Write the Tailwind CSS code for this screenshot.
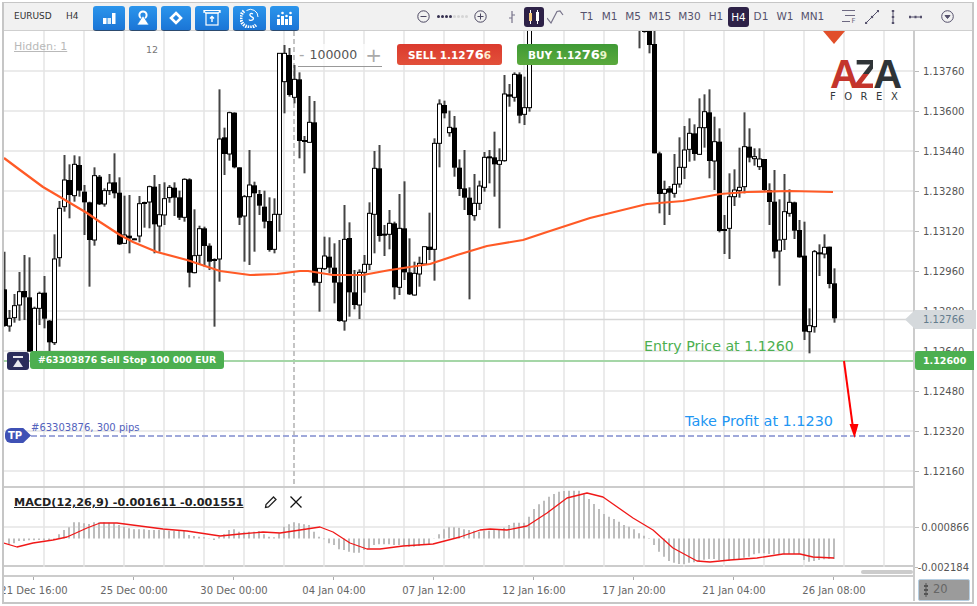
<!DOCTYPE html>
<html lang="en">
<head>
  <meta charset="UTF-8" />
  <title>EURUSD H4</title>
  <script src="https://cdn.jsdelivr.net/npm/@tailwindcss/browser@4"></script>
</head>
<body class="bg-white">
<div class="w-[977px] h-[606px] overflow-hidden pl-[2px] pt-[2px] font-['DejaVu_Sans',sans-serif]">
  <div class="w-[972px] h-[602px] border-x-2 border-t border-b-2 border-[#c6c6c6]">

    <!-- toolbar -->
    <div class="flex items-center h-[28px] bg-[#f1f1f1] border-b border-[#cfcfcf] text-[#3d3a55]">
      <span class="w-[62px] pl-[10px] text-[9px] text-[#333]">EURUSD</span>
      <span class="w-[27px] text-[9px] text-[#333]">H4</span>
      <div class="flex gap-[4px] h-[25px] mt-[3px]">
        <button class="w-[32px] flex items-center justify-center rounded-[3px] border-b border-[#2c4a6e] bg-linear-to-b from-[#2b95ec] to-[#1b75d6]">
          <svg width="14" height="12" viewBox="0 0 14 12" fill="#fff"><rect x="1" y="6" width="3.5" height="6"/><rect x="5.5" y="6" width="3.5" height="6" fill="#d8ecfb"/><rect x="10" y="1" width="3.5" height="11"/></svg>
        </button>
        <button class="w-[28px] flex items-center justify-center rounded-[3px] border-b border-[#2c4a6e] bg-linear-to-b from-[#2b95ec] to-[#1b75d6]">
          <svg width="14" height="15" viewBox="0 0 14 15"><circle cx="7" cy="5" r="3.600" fill="none" stroke="#fff" stroke-width="2"/><path d="M7 5.500 13 15H1z" fill="#fff" stroke="#2186e2" stroke-width=".8"/></svg>
        </button>
        <button class="w-[30px] flex items-center justify-center rounded-[3px] border-b border-[#2c4a6e] bg-linear-to-b from-[#2b95ec] to-[#1b75d6]">
          <svg width="14" height="14" viewBox="0 0 14 14" fill="none" stroke="#fff" stroke-width="2.6"><path d="M7 2 12 7 7 12 2 7z"/></svg>
        </button>
        <button class="w-[34px] flex items-center justify-center rounded-[3px] border-b border-[#2c4a6e] bg-linear-to-b from-[#2b95ec] to-[#1b75d6]">
          <svg width="18" height="17" viewBox="0 0 18 17" fill="none" stroke="#fff" stroke-width="1.2"><path d="M1 4V1.5h16V4"/><path d="M1 1.5 2.5 4h13L17 1.5"/><rect x="3" y="4" width="12" height="12"/><path d="M9 13V7.5M7 9.5l2-2 2 2" stroke-width="1.4"/></svg>
        </button>
        <button class="w-[33px] flex items-center justify-center rounded-[3px] border-b border-[#2c4a6e] bg-linear-to-b from-[#2b95ec] to-[#1b75d6]">
          <svg width="20" height="20" viewBox="0 0 20 20" fill="none" stroke="#fff"><path d="M4 3A8.500 8.500 0 0 0 16 17" stroke-width="3.400" stroke-dasharray="1.500 1"/><path d="M6.500 2.500A7.500 7.500 0 0 1 18 9" stroke-width="1"/><path d="M13 6C10.500 4.500 9 6.500 10.500 8S14.500 9.500 13 11.500C11.500 13 9.500 12.500 9 11.500" stroke-width="1.300"/></svg>
        </button>
        <button class="w-[29px] flex items-center justify-center rounded-[3px] border-b border-[#2c4a6e] bg-linear-to-b from-[#2b95ec] to-[#1b75d6]">
          <svg width="15" height="14" viewBox="0 0 15 14" fill="#fff"><rect x="0" y="8" width="3" height="6"/><rect x="4" y="5" width="3" height="9"/><rect x="8" y="8" width="3" height="6"/><rect x="12" y="5" width="3" height="9"/><circle cx="1.500" cy="5" r="1.300"/><circle cx="5.500" cy="2" r="1.300"/><circle cx="9.500" cy="5" r="1.300"/><circle cx="13.500" cy="2" r="1.300"/></svg>
        </button>
      </div>

      <!-- zoom -->
      <svg class="ml-[118px]" width="13" height="13" viewBox="0 0 13 13" fill="none" stroke="#4a4660"><circle cx="6.500" cy="6.500" r="5.700"/><path d="M3.500 6.500h6"/></svg>
      <div class="flex gap-px ml-[7px] mr-[6px]">
        <i class="w-[3px] h-[3px] rounded-full bg-[#35304f]"></i><i class="w-[3px] h-[3px] rounded-full bg-[#35304f]"></i><i class="w-[3px] h-[3px] rounded-full bg-[#35304f]"></i><i class="w-[3px] h-[3px] rounded-full bg-[#35304f]"></i>
        <i class="w-[3px] h-[3px] rounded-full bg-[#d5d5d5]"></i><i class="w-[3px] h-[3px] rounded-full bg-[#d5d5d5]"></i><i class="w-[3px] h-[3px] rounded-full bg-[#d5d5d5]"></i><i class="w-[3px] h-[3px] rounded-full bg-[#d5d5d5]"></i>
      </div>
      <svg width="13" height="13" viewBox="0 0 13 13" fill="none" stroke="#4a4660"><circle cx="6.500" cy="6.500" r="5.700"/><path d="M3.500 6.500h6M6.500 3.500v6"/></svg>

      <!-- chart type -->
      <svg class="ml-[19px]" width="12" height="14" viewBox="0 0 12 14" fill="none" stroke="#77738a" stroke-width="1.200"><path d="M6 1v12M3 8h3M6 5h3"/></svg>
      <div class="ml-[6px] w-[20px] h-[20px] rounded-[3px] bg-[#2d2147] flex items-center justify-center">
        <svg width="14" height="14" viewBox="0 0 14 14"><path d="M3.500 0v14M10.500 0v14" stroke="#fff"/><rect x="2" y="3" width="3" height="8" fill="#f6c97a"/><rect x="9" y="2" width="3" height="9" fill="#fff"/></svg>
      </div>
      <svg class="ml-[3px]" width="17" height="14" viewBox="0 0 17 14" fill="none" stroke="#77738a" stroke-width="1.200"><path d="M0 8l4 5L10 1.500 13 1l3 4"/></svg>

      <!-- timeframes -->
      <div class="flex items-center ml-[12px] text-[10.500px] text-[#55516c] text-center">
        <span class="w-[22px]">T1</span>
        <span class="w-[23px]">M1</span>
        <span class="w-[24px]">M5</span>
        <span class="w-[30px]">M15</span>
        <span class="w-[29px]">M30</span>
        <span class="w-[24px]">H1</span>
        <span class="w-[21px] h-[20px] leading-[20px] rounded-[3px] bg-[#2d2147] text-white">H4</span>
        <span class="w-[24px]">D1</span>
        <span class="w-[24px]">W1</span>
        <span class="w-[31px]">MN1</span>
      </div>

      <!-- drawing tools -->
      <svg class="ml-[14px]" width="15" height="14" viewBox="0 0 15 14" fill="none" stroke="#6d6981"><path d="M0 .5h13M3 5.500h10M0 11.500h8"/><text x="9.500" y="13" font-size="7" fill="#6d6981" stroke="none" font-family="DejaVu Sans">F</text></svg>
      <svg class="ml-[8px]" width="14" height="14" viewBox="0 0 14 14" fill="none" stroke="#55516c"><path d="M1 13 13 1"/><path d="M1 13h.1M7 7h.1M13 1h.1" stroke-width="2.400" stroke-linecap="round"/></svg>
      <svg class="ml-[12px]" width="4" height="14" viewBox="0 0 4 14" fill="none" stroke="#55516c"><path d="M2 0v14" stroke-width="1"/><path d="M2 0v2M2 6v2M2 12v2" stroke-width="2.400"/></svg>
      <svg class="ml-[14px]" width="13" height="4" viewBox="0 0 13 4" fill="none" stroke="#55516c"><path d="M0 2h13"/><path d="M0 2h2M5.500 2h2M11 2h2" stroke-width="2.400"/></svg>
      <svg class="ml-[19px]" width="13" height="13" viewBox="0 0 13 13" fill="none" stroke="#55516c"><circle cx="6.500" cy="6.500" r="5.800"/><path d="M4 5.500h5L6.500 8.500z" fill="#55516c"/></svg>
    </div>

    <div class="flex">
      <!-- left column -->
      <div class="w-[909px]">
        <div class="relative h-[455px]">
          <svg id="chart" class="block" width="909" height="455" viewBox="4 31 909 455"></svg>

          <span class="absolute left-[10px] top-[8px] text-[11px] text-[#b9b9b9] underline">Hidden: 1</span>
          <span class="absolute left-[142px] top-[12px] text-[9.500px] text-[#777]">12</span>

          <div class="absolute left-[294px] top-[13px] w-[84px] h-[23px] flex items-center border-b border-[#999] text-[#555] bg-white/70">
            <span class="w-[16px] text-center text-[15px] text-[#aaa]">-</span>
            <span class="ml-[4px] text-[12.500px]">100000</span>
            <span class="ml-[8px] text-[20px] leading-none text-[#aaa]">+</span>
          </div>

          <button class="absolute left-[393px] top-[13px] w-[105px] h-[21px] rounded-[3px] bg-linear-to-b from-[#db3a2e] to-[#e2503a] text-white font-bold text-[10.500px] leading-[21px]">SELL 1.12<span class="text-[13px]">76</span><span class="text-[#fde9c9]">6</span></button>
          <button class="absolute left-[513px] top-[13px] w-[101px] h-[21px] rounded-[3px] bg-linear-to-b from-[#3f9a36] to-[#5aa93c] text-white font-bold text-[10.500px] leading-[21px]">BUY 1.12<span class="text-[13px]">76</span><span class="text-[#e8f5c8]">9</span></button>

          <div class="absolute left-[826px] top-[25px] w-[70px] whitespace-nowrap">
            <div class="text-[40px] leading-[36px] h-[36px] font-bold tracking-[-5px] font-['Liberation_Sans',sans-serif]"><span class="text-[#c4352c]">A</span><span class="text-transparent bg-clip-text bg-linear-to-b from-[#2f3437] from-50% to-[#c4352c] to-50%">Z</span><span class="text-[#2f3437]">A</span></div>
            <div class="text-[10px] leading-[10px] tracking-[8.500px] text-[#33383b]">FOREX</div>
          </div>

          <div class="absolute left-[3px] top-[321px] w-[22px] h-[18px] rounded-[3px] bg-[#2b2d5b] flex items-center justify-center">
            <svg width="12" height="11" viewBox="0 0 12 11" fill="#e8e8ee"><rect x="1" y="0" width="10" height="2"/><path d="M6 3.500 11 11H1z"/></svg>
          </div>
          <div class="absolute left-[26px] top-[320px] w-[194px] h-[18px] rounded-[3px] bg-[#4caf50] text-white font-bold text-[9.250px] leading-[18px] text-center whitespace-nowrap">#63303876 Sell Stop 100 000 EUR</div>
          <span class="absolute left-[640px] top-[305px] text-[14.200px] text-[#4caf50] whitespace-nowrap">Entry Price at 1.1260</span>

          <div class="absolute left-[1px] top-[397px] w-[26px] h-[15px] bg-[#3f51b5] text-white font-bold text-[10px] leading-[15px] pl-[3px] rounded-l-[6px] [clip-path:polygon(0_0,70%_0,100%_50%,70%_100%,0_100%)]">TP</div>
          <span class="absolute left-[27px] top-[389px] text-[10px] text-[#5262bd] whitespace-nowrap">#63303876, 300 pips</span>
          <span class="absolute left-[681px] top-[380px] text-[14.400px] text-[#2196f3] whitespace-nowrap">Take Profit at 1.1230</span>
        </div>

        <div class="relative h-[81px] border-y-2 border-[#cccccc]">
          <svg id="macd" class="block" width="909" height="79" viewBox="4 488 909 79"></svg>
          <span class="absolute left-[10px] top-[7px] text-[11.200px] font-bold text-[#222] underline whitespace-nowrap">MACD(12,26,9) -0.001611 -0.001551</span>
          <svg class="absolute left-[260px] top-[7px]" width="14" height="14" viewBox="0 0 14 14" fill="none" stroke="#222" stroke-width="1.300"><path d="M1.500 12.500 2 9.500 9.500 2 12 4.500 4.500 12z"/></svg>
          <svg class="absolute left-[285px] top-[7px]" width="14" height="14" viewBox="0 0 14 14" fill="none" stroke="#111" stroke-width="1.300"><path d="M1.500 1.500 12.500 12.500M12.500 1.500 1.500 12.500"/></svg>
        </div>

        <div class="relative h-[10px] border-b-2 border-[#cccccc]">
          <div class="absolute left-[857px] top-[3px] w-[52px] h-[4px] rounded-full bg-[#cccccc]"></div>
        </div>

        <div class="flex w-[909px] h-[24px] overflow-hidden text-[10px] text-[#666]">
          <div class="w-[100px] ml-[-20px] text-center relative shrink-0 pt-[6px]"><i class="absolute left-[49px] top-0 w-px h-[3px] bg-[#aaa]"></i>21 Dec 16:00</div>
          <div class="w-[100px] text-center relative shrink-0 pt-[6px]"><i class="absolute left-[49px] top-0 w-px h-[3px] bg-[#aaa]"></i>25 Dec 00:00</div>
          <div class="w-[100px] text-center relative shrink-0 pt-[6px]"><i class="absolute left-[49px] top-0 w-px h-[3px] bg-[#aaa]"></i>30 Dec 00:00</div>
          <div class="w-[100px] text-center relative shrink-0 pt-[6px]"><i class="absolute left-[49px] top-0 w-px h-[3px] bg-[#aaa]"></i>04 Jan 04:00</div>
          <div class="w-[100px] text-center relative shrink-0 pt-[6px]"><i class="absolute left-[49px] top-0 w-px h-[3px] bg-[#aaa]"></i>07 Jan 12:00</div>
          <div class="w-[100px] text-center relative shrink-0 pt-[6px]"><i class="absolute left-[49px] top-0 w-px h-[3px] bg-[#aaa]"></i>12 Jan 16:00</div>
          <div class="w-[100px] text-center relative shrink-0 pt-[6px]"><i class="absolute left-[49px] top-0 w-px h-[3px] bg-[#aaa]"></i>17 Jan 20:00</div>
          <div class="w-[100px] text-center relative shrink-0 pt-[6px]"><i class="absolute left-[49px] top-0 w-px h-[3px] bg-[#aaa]"></i>21 Jan 04:00</div>
          <div class="w-[100px] text-center relative shrink-0 pt-[6px]"><i class="absolute left-[49px] top-0 w-px h-[3px] bg-[#aaa]"></i>26 Jan 08:00</div>
        </div>
      </div>

      <!-- price axis -->
      <div class="relative z-10 w-[59px] border-l-2 border-[#cccccc] text-[10px] text-[#555]">
        <div class="h-[455px] pt-[20px]">
          <div class="flex items-center h-[40px]"><i class="w-[4px] h-px bg-[#bbb] mr-[4px]"></i>1.13760</div>
          <div class="flex items-center h-[40px]"><i class="w-[4px] h-px bg-[#bbb] mr-[4px]"></i>1.13600</div>
          <div class="flex items-center h-[40px]"><i class="w-[4px] h-px bg-[#bbb] mr-[4px]"></i>1.13440</div>
          <div class="flex items-center h-[40px]"><i class="w-[4px] h-px bg-[#bbb] mr-[4px]"></i>1.13280</div>
          <div class="flex items-center h-[40px]"><i class="w-[4px] h-px bg-[#bbb] mr-[4px]"></i>1.13120</div>
          <div class="flex items-center h-[40px]"><i class="w-[4px] h-px bg-[#bbb] mr-[4px]"></i>1.12960</div>
          <div class="flex items-center h-[40px]"><i class="w-[4px] h-px bg-[#bbb] mr-[4px]"></i>1.12800</div>
          <div class="flex items-center h-[40px]"><i class="w-[4px] h-px bg-[#bbb] mr-[4px]"></i>1.12640</div>
          <div class="flex items-center h-[40px]"><i class="w-[4px] h-px bg-[#bbb] mr-[4px]"></i>1.12480</div>
          <div class="flex items-center h-[40px]"><i class="w-[4px] h-px bg-[#bbb] mr-[4px]"></i>1.12320</div>
          <div class="flex items-center h-[40px]"><i class="w-[4px] h-px bg-[#bbb] mr-[4px]"></i>1.12160</div>
        </div>
        <div class="h-[92px] pt-[31px]">
          <div class="flex items-center justify-between h-[20px] mb-[20px] pr-[3px]"><i class="w-[4px] h-px bg-[#bbb]"></i>0.000866</div>
          <div class="flex items-center justify-between h-[20px] pr-[3px]"><i class="w-[3px] h-px bg-[#bbb]"></i>-0.002184</div>
        </div>
        <div class="ml-[3px] w-[52px] h-[22px] mt-[1px] flex items-center gap-[4px] pl-[4px] rounded-[2px] bg-[#9b9b9b] border border-[#b7cfe2] text-[11.500px] text-[#666]">
          <svg width="6" height="14" viewBox="0 0 6 14" fill="none" stroke="#555"><path d="M3 0v14"/><path d="M1 3h4M1 11h4M1 7h4" stroke-width="2"/></svg>
          20
        </div>

        <!-- live price tags -->
        <div class="absolute left-[-10px] top-[279px] w-[71px] h-[19px] pl-[18px] bg-[#d5d9dc] text-[#637c8d] leading-[19px] [clip-path:polygon(0_50%,14%_0,100%_0,100%_100%,14%_100%)]">1.12766</div>
        <div class="absolute left-0 top-[320px] w-[59px] h-[19px] pl-[8px] rounded-l-[3px] bg-[#4caf50] text-white font-bold text-[9.500px] leading-[19px]">1.12600</div>
      </div>
    </div>
  </div>
</div>

<script>
  // candles read off the chart, [wick top, wick bottom, body top, body bottom, black?]
  // rows are 5px apart and given in 3x units so they line up with the crop they came from
  const runs = [
    { x: 4, oy: 80, rows: [
      [515,740,628,738,1],[690,755,715,738,0],[642,728,677,713,0],[576,722,635,675,0],[525,720,633,652,1],[532,815,652,815,1],
      [680,815,685,815,0],[635,735,640,685,0],[588,745,638,716,1],[720,815,722,787,1],[463,795,537,788,0],[363,560,385,533,0],
      [225,395,300,380,0],[253,415,300,345,1],[226,365,253,347,0],[229,350,255,332,1],[315,465,335,367,1],[365,620,367,480,1],
      [262,497,287,480,0],[285,375,290,373,1],[325,380,332,372,0],[282,345,309,332,0],[220,355,307,340,1],[292,495,338,493,1],
      [347,492,465,490,0],[345,520,467,475,1],[475,477,475,477,1],[348,487,371,468,0],[365,443,366,369,1],[317,445,320,366,0],
      [285,520,320,433,1],[312,515,404,438,0],[307,435,356,405,0],[315,368,322,353,0],[307,408,323,353,1],[332,420,352,413,1],
      [295,425,298,412,0],[295,622,298,578,1],[388,580,527,578,0],[437,555,446,526,0],[440,560,445,498,1],[490,570,497,545,1],
      [535,740,537,543,1],[28,605,177,537,0],[143,285,172,222,1],[95,242,98,222,0],[97,265,98,262,1],[262,435,262,413,1],
      [345,545,350,408,0],[210,555,315,350,0],[305,515,316,340,1],[330,405,342,377,1],[332,445,380,425,1],[352,515,423,510,1],
      [355,520,403,508,0],[270,455,-80,403,0],[-105,100,-80,5,0]
    ]},
    { x: 289, oy: 40, rows: [
      [24,170,45,165,1],[75,190,118,172,0],[97,355,118,303,1],[288,400,300,306,1],[168,307,247,307,0],[183,737,247,728,1],
      [685,815,685,727,0],[590,690,648,686,0],[592,700,650,683,1],[610,790,683,728,1],[600,845,727,843,1],[495,872,598,843,0],
      [547,830,594,757,1],[690,808,757,795,1],[688,837,697,795,0],[645,758,673,697,0],[487,690,520,673,0],[333,640,385,523,0],
      [315,605,385,588,1],[555,648,581,586,1],[510,628,550,583,0],[545,778,550,742,1],[462,765,565,742,0],[424,720,565,697,1],
      [595,765,697,763,1],[665,767,700,765,0],[650,740,670,702,0],[620,675,620,672,0],[518,660,620,630,1],[295,722,310,628,0],
      [178,382,192,310,0],[182,235,195,220,1],[212,290,262,278,0],[228,410,263,383,1],[358,468,383,447,1],[330,510,445,473,1],
      [442,778,473,525,1],[402,542,490,527,0],[422,510,438,490,0],[336,455,352,442,0],[330,430,349,352,1],[275,470,352,373,1],
      [325,565,362,373,0],[105,365,162,362,0],[132,200,163,170,1],[97,185,103,172,0],[97,250,103,227,1],[110,255,203,223,0],
      [-40,215,-40,203,0]
    ]},
    { x: 639, oy: 30, rows: [
      [-10,55,-10,-10,1],[0,8,0,4,1],[-10,70,-10,45,1],[-10,370,42,370,1],[365,550,370,492,1],[452,585,478,490,0],[468,555,475,488,1],
      [372,503,463,490,0],[322,473,412,462,0],[288,447,360,412,0],[265,395,310,358,0],[283,392,310,372,1],[205,375,293,373,0],
      [193,353,245,293,0],[178,445,247,393,1],[260,480,335,393,0],[295,607,335,603,1],[555,672,597,603,1],[430,687,500,595,0],
      [418,528,480,500,0],[353,503,472,482,0],[247,490,350,470,0],[295,397,350,383,1],[355,407,380,385,0],[355,420,387,410,0],
      [387,483,387,480,1],[460,585,480,516,1],[420,685,515,665,1],[508,767,630,663,0],[432,660,545,628,0],[478,560,517,550,0],
      [515,627,517,602,1],[570,683,600,682,1],[575,930,677,905,1],[835,970,887,905,0],[660,908,665,890,0],[643,738,667,673,1],
      [613,685,652,672,0],[650,775,650,762,1],[715,878,760,865,1]
    ]}
  ];

  const ema = "M4 158 20 170 43 187 60 197 87 213 100 222 120 235 133 242 157 252 187 260 220 271 250 275 277 274 300 271 308 271 333 275 363 275 390 270 430 264 457 255 487 246 523 240 547 232 590 218 647 204 683 201 720 194 747 192 790 191 833 192";
  const signal = "M4 543 17 547 33 543 53 540 67 537 87 528 100 523 117 523 140 526 163 529 187 531 220 536 240 534 263 532 280 533 300 530 320 527 333 532 350 543 367 549 380 549 403 546 433 544 460 537 480 530 490 529 507 530 527 526 547 513 567 498 587 493 603 497 633 518 653 530 673 548 697 561 710 562 730 560 757 558 783 554 800 554 813 557 834 558";

  // histogram bar ends, 3x units from y=485, first bar at x=9
  const hist = [178,175,168,168,166,166,165,165,165,165,148,135,127,112,112,115,117,112,112,112,113,115,120,125,130,133,133,133,135,135,135,135,137,137,137,137,150,153,155,157,160,165,155,148,135,133,140,140,140,140,138,148,155,157,145,125,118,112,115,118,120,140,155,163,175,180,193,195,200,203,203,195,190,180,178,178,178,180,180,182,185,185,183,180,178,160,148,133,127,127,128,133,135,137,140,137,137,135,135,128,120,113,113,113,95,72,58,47,35,27,20,18,17,17,17,28,42,57,72,87,95,102,110,120,125,133,145,152,159,180,200,215,228,233,237,237,233,232,228,224,222,222,225,226,228,225,222,218,215,208,205,205,207,208,210,208,207,207,208,225,230,228,225,223,222,222];

  function grid(y0, y1, rows) {
    let s = "";
    for (let x = 44; x < 900; x += 40) s += `<path d="M${x} ${y0}V${y1}" stroke="#e4e4e4" stroke-width="1.500"/>`;
    rows.forEach(y => s += `<path d="M4 ${y}H913" stroke="#e4e4e4" stroke-width="1.500"/>`);
    return s;
  }

  let main = grid(31, 486, [71,111,151,191,231,271,311,351,391,431,471]);
  main += `<path d="M294 31V486" stroke="#c4c4c4" stroke-width="2" stroke-dasharray="5 3"/>`;
  main += `<path d="M4 319.500H913" stroke="#d6d6d6" stroke-width="1.500"/>`;

  runs.forEach(run => run.rows.forEach((c, i) => {
    const x = run.x + i * 5 + 0.5;
    const [wt, wb, bt, bb] = c.slice(0, 4).map(v => v / 3 + run.oy);
    main += `<path d="M${x} ${wt}V${wb}" stroke="#444" stroke-width="2"/>`;
    main += c[4]
      ? `<rect x="${x - 2.5}" y="${bt}" width="5" height="${Math.max(bb - bt, 2)}" fill="#000"/>`
      : `<rect x="${x - 2}" y="${bt}" width="4" height="${Math.max(bb - bt, 2)}" fill="#fff" stroke="#000" stroke-width="1"/>`;
  }));

  main += `<path d="${ema}" fill="none" stroke="#ff5a26" stroke-width="2.200" stroke-linejoin="round"/>`;
  main += `<path d="M4 361H913" stroke="#a5d6a7" stroke-width="2"/>`;
  main += `<path d="M31 436H913" stroke="#9fa8da" stroke-width="2" stroke-dasharray="6 3"/>`;
  main += `<path d="M823 31H845L834 44z" fill="#e14f2a"/>`;
  main += `<path d="M844 361 853 428" stroke="#f00" stroke-width="2"/><path d="M849.500 424H858.500L854.500 438z" fill="#f00"/>`;
  document.getElementById("chart").innerHTML = main;

  let lower = grid(488, 567, [527]);
  hist.forEach((v, i) => {
    const x = 9 + i * 5;
    const y = v / 3 + 485;
    lower += `<path d="M${x} 538.500V${y}" stroke="#bdbdbd" stroke-width="2"/>`;
  });
  lower += `<path d="${signal}" fill="none" stroke="#f01818" stroke-width="1.300" stroke-linejoin="round"/>`;
  document.getElementById("macd").innerHTML = lower;
</script>
</body>
</html>
